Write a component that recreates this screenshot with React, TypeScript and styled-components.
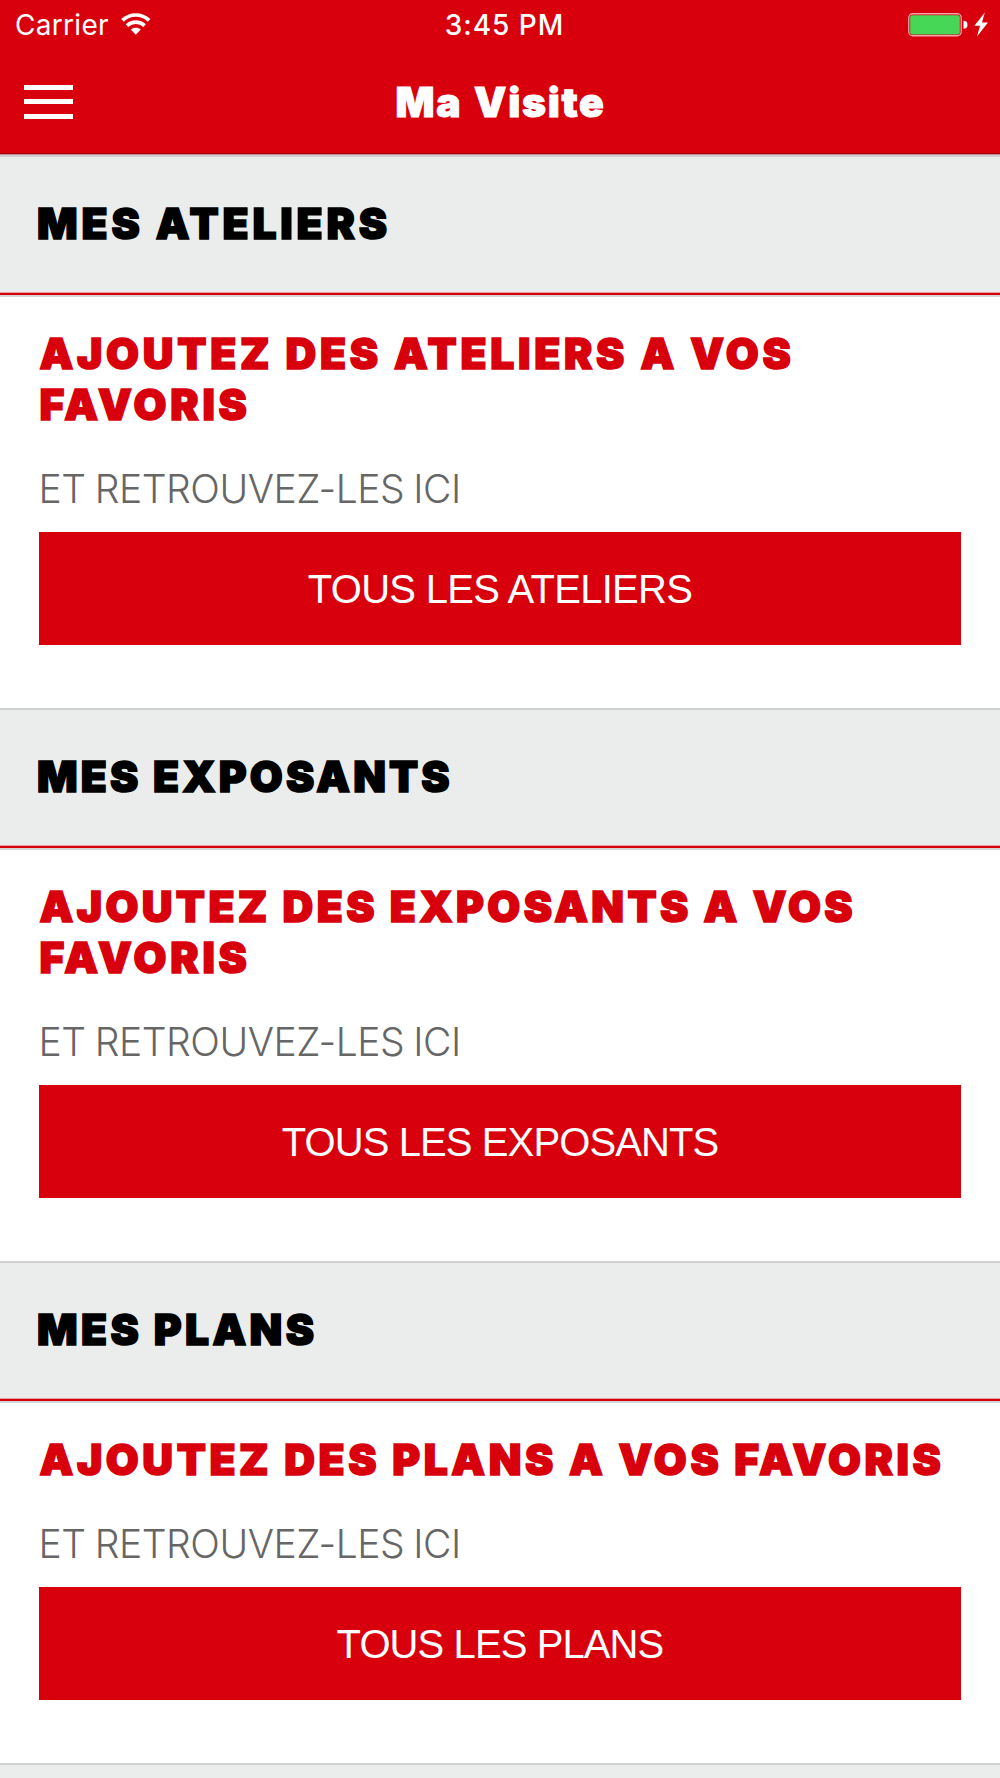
import React from "react";
import styled, { createGlobalStyle } from "styled-components";

const RED = "#d9000d";
const GREY = "#ebedec";

const GlobalStyle = createGlobalStyle`
  * { box-sizing: border-box; }
  html, body { margin: 0; padding: 0; background: #fff; }
  body { overflow: hidden; font-family: Inter, "Liberation Sans", sans-serif; }
`;

const Screen = styled.div`
  width: 1000px;
  height: 1778px;
  overflow: hidden;
  background: #fff;
`;

const StatusBar = styled.div`
  display: grid;
  grid-template-columns: 1fr auto 1fr;
  align-items: center;
  height: 50px;
  padding: 1px 12px 0 15px;
  background: ${RED};
  color: #fff;
  font-size: 28px;
  line-height: 49px;
`;

const Carrier = styled.div`
  display: flex;
  align-items: center;
  gap: 12px;
  letter-spacing: 0.3px;

  svg { margin-top: -3px; }
`;

const Clock = styled.div`
  font-weight: 500;
  letter-spacing: 0.95px;
  padding-left: 6px;
`;

const Power = styled.div`
  display: flex;
  align-items: center;
  justify-content: flex-end;
  padding-bottom: 1px;
`;

const NavBar = styled.header`
  display: grid;
  grid-template-columns: 1fr auto 1fr;
  align-items: center;
  height: 105px;
  padding: 0 24px 1px;
  background: ${RED};
  border-bottom: 1px solid #c08a90;
  box-shadow: inset 0 -1px 0 #a5000b;
`;

const MenuButton = styled.button`
  display: flex;
  flex-direction: column;
  justify-content: space-between;
  width: 49px;
  height: 34px;
  padding: 0;
  border: 0;
  background: none;
`;

const Bar = styled.span`
  height: 5px;
  background: #fff;
`;

const Title = styled.h1`
  margin: 0;
  padding-left: 1px;
  color: #fff;
  font-size: 40.8px;
  font-weight: 900;
  letter-spacing: 1.7px;
  word-spacing: 2px;
  line-height: 50px;
  -webkit-text-stroke: 1px #fff;
`;

const SectionHeader = styled.h2<{ $spacing: number }>`
  height: 140px;
  margin: 0;
  padding-left: 37px;
  background: ${GREY};
  border-top: 2px solid #cfd1d1;
  border-bottom: 2px solid ${RED};
  box-shadow: inset 0 -1px 0 #e4a0a4;
  color: #000;
  font-size: 42.5px;
  font-weight: 900;
  letter-spacing: ${(p) => p.$spacing}px;
  line-height: 133px;
  -webkit-text-stroke: 1.6px #000;
`;

const SectionBody = styled.div`
  padding: 31px 39px 63.5px;
  border-top: 2px solid #d5d6d7;
`;

const Headline = styled.p<{ $spacing: number }>`
  margin: 0;
  padding-left: 0.5px;
  color: ${RED};
  font-size: 42.5px;
  font-weight: 900;
  letter-spacing: ${(p) => p.$spacing}px;
  line-height: 51px;
  white-space: nowrap;
  -webkit-text-stroke: 1.6px ${RED};
`;

const Hint = styled.p`
  margin: 33px 0 0 -0.5px;
  color: #666;
  font-size: 39px;
  font-weight: 300;
  letter-spacing: -0.47px;
  word-spacing: -1.3px;
  line-height: 51px;
`;

const ActionButton = styled.button<{ $spacing: number }>`
  display: block;
  width: 922px;
  height: 113px;
  margin: 17.5px 0 0;
  padding: 2px 0 0;
  border: 0;
  background: ${RED};
  color: #fff;
  font: 400 40px/110px "Liberation Sans", Arial, sans-serif;
  letter-spacing: ${(p) => p.$spacing}px;
  text-align: center;
`;

type Line = { text: string; spacing: number };

type SectionData = {
  title: Line;
  headline: Line[];
  action: Line;
};

const sections: SectionData[] = [
  {
    title: { text: "MES ATELIERS", spacing: 3.85 },
    headline: [
      { text: "AJOUTEZ DES ATELIERS A VOS", spacing: 3.75 },
      { text: "FAVORIS", spacing: 3.75 },
    ],
    action: { text: "TOUS LES ATELIERS", spacing: -0.7 },
  },
  {
    title: { text: "MES EXPOSANTS", spacing: 3.15 },
    headline: [
      { text: "AJOUTEZ DES EXPOSANTS A VOS", spacing: 3.4 },
      { text: "FAVORIS", spacing: 3.75 },
    ],
    action: { text: "TOUS LES EXPOSANTS", spacing: -0.9 },
  },
  {
    title: { text: "MES PLANS", spacing: 3.35 },
    headline: [{ text: "AJOUTEZ DES PLANS A VOS FAVORIS", spacing: 3.6 }],
    action: { text: "TOUS LES PLANS", spacing: -0.9 },
  },
];

const WifiIcon = () => (
  <svg width="30" height="22" viewBox="0 0 30 22" fill="none" stroke="#fff">
    <path d="M1.5 7.4C9 0.2 20.6 0.2 28.1 7.4" strokeWidth="3.7" />
    <path d="M6 12.6C11 7.9 18.6 7.9 23.6 12.6" strokeWidth="3.7" />
    <path d="M14.8 21.7L9.8 16.6C12.6 14 17 14 19.8 16.6Z" fill="#fff" stroke="none" />
  </svg>
);

const BatteryIcon = () => (
  <svg width="80" height="26" viewBox="0 0 80 26">
    <rect x="0.75" y="1.75" width="52.5" height="22" rx="4" fill="none" stroke="#f5a3a6" strokeWidth="1.3" />
    <rect x="2.2" y="3.2" width="49.6" height="19.2" rx="2" fill="#46d756" />
    <path d="M55.5 8.8a4 4 0 0 1 0 8z" fill="#fff" />
    <path d="M76.8 0.6L66.4 13.8h5.6L69 24.4L80 10.4h-6z" fill="#fff" />
  </svg>
);

export default function App() {
  return (
    <>
      <GlobalStyle />
      <Screen>
        <StatusBar>
          <Carrier>
            Carrier
            <WifiIcon />
          </Carrier>
          <Clock>3:45 PM</Clock>
          <Power>
            <BatteryIcon />
          </Power>
        </StatusBar>
        <NavBar>
          <MenuButton aria-label="Menu">
            <Bar />
            <Bar />
            <Bar />
          </MenuButton>
          <Title>Ma Visite</Title>
        </NavBar>
        {sections.map(({ title, headline, action }) => (
          <section key={title.text}>
            <SectionHeader $spacing={title.spacing}>{title.text}</SectionHeader>
            <SectionBody>
              {headline.map((line) => (
                <Headline key={line.text} $spacing={line.spacing}>
                  {line.text}
                </Headline>
              ))}
              <Hint>ET RETROUVEZ-LES ICI</Hint>
              <ActionButton $spacing={action.spacing}>{action.text}</ActionButton>
            </SectionBody>
          </section>
        ))}
        <SectionHeader as="div" $spacing={3} />
      </Screen>
    </>
  );
}
